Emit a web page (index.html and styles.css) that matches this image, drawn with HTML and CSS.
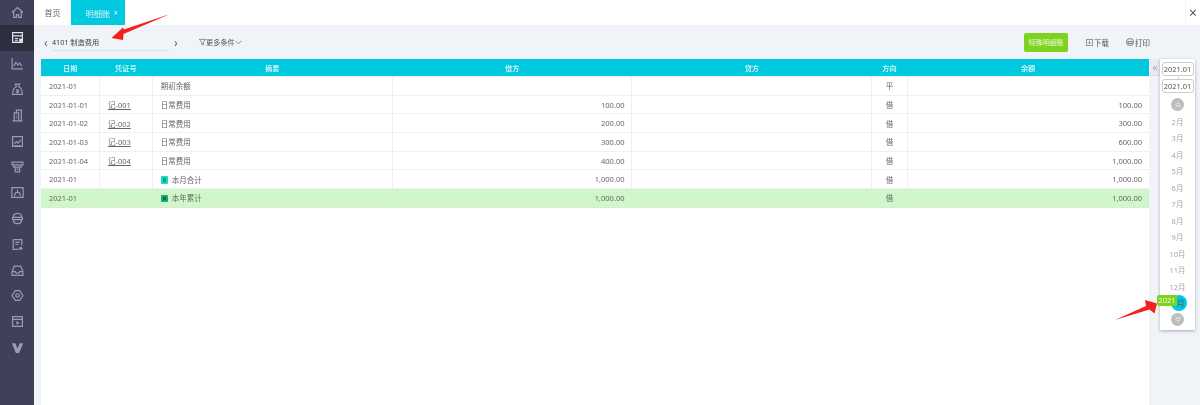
FILE: index.html
```html
<!DOCTYPE html>
<html lang="zh">
<head>
<meta charset="utf-8">
<title>明细账</title>
<link rel="stylesheet" href="styles.css">
</head>
<body>
<div class="app">
  <nav class="side">
    <div class="nav"><svg viewBox="0 0 12 12"><path d="M1 6 6 1.500 11 6M2.500 5v5.500h2.500V8h2v2.500h2.500V5"/></svg></div>
    <div class="nav on"><svg viewBox="0 0 12 12"><path d="M1.500 1.500h9v9h-9zM1.500 4.500h9M3.500 7h3M3.500 9h3"/><rect class="fill" x="7.500" y="7" width="3" height="3"/></svg></div>
    <div class="nav"><svg viewBox="0 0 12 12"><path d="M1 1v10h10M2.500 8.500 4.500 5l2 2.500 1.500-2 2 3"/></svg></div>
    <div class="nav"><svg viewBox="0 0 12 12"><path d="M4 1h4L7 3.500c3 1 3.500 3.500 3.500 7h-9c0-3.500.5-6 3.500-7zM4.500 6.500h3M4.500 8.500h3M6 6.500v3"/></svg></div>
    <div class="nav"><svg viewBox="0 0 12 12"><path d="M3 3.500h4V11H3zM5 3.500V1h4.500v10H7M1.500 11h9M4.500 6h1M4.500 8h1"/></svg></div>
    <div class="nav"><svg viewBox="0 0 12 12"><path d="M1.500 1.500h9v9h-9zM3 8l2-2 1.500 1.500L9 4.500M3 10h6"/></svg></div>
    <div class="nav"><svg viewBox="0 0 12 12"><path d="M1 2h10v2.500H1zM2.500 4.500v2h7v-2M4 6.500V11h4V6.500M5 8.500h2"/></svg></div>
    <div class="nav"><svg viewBox="0 0 12 12"><path d="M.8 1.500h10.400v9H.8zM3 9l1.500-3h3L9 9M6 3.500v2"/></svg></div>
    <div class="nav"><svg viewBox="0 0 12 12"><path d="M2.500 2.500c2-1.500 5-1.500 7 0v2.500h-7zM1.500 5h9v2h-9zM2.500 7v2.500c2 1.500 5 1.500 7 0V7"/></svg></div>
    <div class="nav"><svg viewBox="0 0 12 12"><path d="M2 1.500h8V7M2 1.500v9h5M4 4h4M4 6h3"/><circle class="fill" cx="9" cy="9.500" r="1.500"/></svg></div>
    <div class="nav"><svg viewBox="0 0 12 12"><path d="M3 2h6l2 5v3.500H1V7zM1 7h3l.8 1.500h2.400L8 7h3"/></svg></div>
    <div class="nav"><svg viewBox="0 0 12 12"><path d="M4 1.500h4L11 6 8 10.500H4L1 6z"/><circle cx="6" cy="6" r="1.600"/></svg></div>
    <div class="nav"><svg viewBox="0 0 12 12"><path d="M1.500 1.500h9v9h-9zM1.500 4h9"/><path class="fill" d="M5 5.500 8 7.300 5 9z"/></svg></div>
    <div class="nav"><svg viewBox="0 0 12 12"><path class="fill" d="M.8 2h3.200L6 7l2-5h3.200L7.500 11h-3z"/></svg></div>
  </nav>

  <div class="body">
    <header class="tabs">
      <a class="tab">首页</a>
      <a class="tab active">明细账<span class="tab-x">×</span></a>
      <span class="grow"></span>
      <a class="close">×</a>
    </header>

    <div class="content">
      <div class="main">
        <div class="toolbar">
          <span class="chev">‹</span>
          <span class="account">4101 制造费用</span>
          <span class="chev next">›</span>
          <span class="filter"><svg viewBox="0 0 8 8"><path d="M.5 1h7L5 4.200V7.500L3 6.500V4.200z"/></svg>更多条件<svg class="down" viewBox="0 0 8 5"><path d="M.5.500 4 4 7.500.500"/></svg></span>
          <span class="grow"></span>
          <button class="special">特殊明细账</button>
          <span class="tool"><svg viewBox="0 0 8 8"><path d="M.5.500h7v7h-7zM4 2v3M2.500 4 4 5.500 5.500 4"/></svg>下载</span>
          <span class="tool print"><svg viewBox="0 0 8 8"><circle cx="4" cy="4" r="3.500"/><path d="M2 3.500h4v2H2z"/></svg>打印</span>
        </div>

        <div class="sheet">
          <table>
            <colgroup>
              <col class="c-date"><col class="c-no"><col class="c-memo"><col class="c-amt"><col class="c-amt"><col class="c-dir"><col>
            </colgroup>
            <thead>
              <tr><th>日期</th><th>凭证号</th><th>摘要</th><th>借方</th><th>贷方</th><th>方向</th><th>余额</th></tr>
            </thead>
            <tbody>
              <tr><td>2021-01</td><td></td><td>期初余额</td><td></td><td></td><td class="ct">平</td><td></td></tr>
              <tr><td>2021-01-01</td><td><u>记-001</u></td><td>日常费用</td><td class="num">100.00</td><td></td><td class="ct">借</td><td class="num">100.00</td></tr>
              <tr><td>2021-01-02</td><td><u>记-002</u></td><td>日常费用</td><td class="num">200.00</td><td></td><td class="ct">借</td><td class="num">300.00</td></tr>
              <tr><td>2021-01-03</td><td><u>记-003</u></td><td>日常费用</td><td class="num">300.00</td><td></td><td class="ct">借</td><td class="num">600.00</td></tr>
              <tr><td>2021-01-04</td><td><u>记-004</u></td><td>日常费用</td><td class="num">400.00</td><td></td><td class="ct">借</td><td class="num">1,000.00</td></tr>
              <tr><td>2021-01</td><td></td><td><i class="tag"></i>本月合计</td><td class="num">1,000.00</td><td></td><td class="ct">借</td><td class="num">1,000.00</td></tr>
              <tr class="year"><td>2021-01</td><td></td><td><i class="tag dark"></i>本年累计</td><td class="num">1,000.00</td><td></td><td class="ct">借</td><td class="num">1,000.00</td></tr>
            </tbody>
          </table>
        </div>
      </div>

      <aside class="rail">
        <span class="fold">«</span>
        <div class="dates">
          <span class="date">2021.01</span>
          <span class="date">2021.01</span>
          <span class="round up"><svg viewBox="0 0 8 8"><path d="M1.500 4 4 1.500 6.500 4M1.500 6.500 4 4l2.500 2.500"/></svg></span>
          <ul class="months">
            <li>2月</li><li>3月</li><li>4月</li><li>5月</li><li>6月</li><li>7月</li><li>8月</li><li>9月</li><li>10月</li><li>11月</li><li>12月</li>
            <li class="current"><span class="dot">月</span><span class="year-tag">2021</span></li>
          </ul>
          <span class="round"><svg viewBox="0 0 8 8"><path d="M1.500 1.500 4 4l2.500-2.500M1.500 4 4 6.500 6.500 4"/></svg></span>
        </div>
      </aside>
    </div>
  </div>

  <svg class="arrow a1" viewBox="0 0 60 27"><path d="M59 0 13 15.500 12 13.500 .5 24 12 26 12.500 20z"/></svg>
  <svg class="arrow a2" viewBox="0 0 44 20"><path d="M0 20 31 6 30 0 42 3.500 39.500 13.500 34.500 9.500z"/></svg>
</div>
</body>
</html>
```

FILE: styles.css
```css
* { box-sizing: border-box; }
html, body { margin: 0; height: 100%; overflow: hidden; }
body { font-family: "Noto Sans", "Noto Sans CJK SC", sans-serif; font-size: 7.5px; color: #666; background: #f0f3f7; }
ul { list-style: none; margin: 0; padding: 0; }

.app { position: relative; display: flex; width: 1200px; height: 405px; filter: blur(.4px); }
.grow { flex: 1; }

.side { width: 34px; flex: none; background: #40405a; display: flex; flex-direction: column; }
.nav { height: 25.800px; display: flex; align-items: center; justify-content: center; }
.nav:first-child { height: 25px; }
.nav.on { background: #2d2e3e; }
.nav svg { width: 13px; height: 13px; fill: none; stroke: #9b9cad; stroke-width: 1.100; }
.nav.on svg { stroke: #e4e5ea; }
.nav .fill { fill: #9b9cad; stroke: none; }
.nav.on .fill { fill: #e4e5ea; }

.body { flex: 1; min-width: 0; display: flex; flex-direction: column; }

.tabs { height: 25px; flex: none; background: #fff; display: flex; align-items: stretch; font-size: 8px; }
.tab { width: 37px; display: flex; align-items: center; justify-content: center; color: #666; }
.tab.active { width: 53.500px; background: #00c8de; color: #d9f7fa; padding-left: 8px; gap: 3px; font-size: 8.300px; }
.tab-x { font-size: 8px; }
.close { width: 15px; display: flex; align-items: center; justify-content: center; font-size: 14px; color: #555; border-left: 1px solid #f0f3f7; }

.content { flex: 1; display: flex; min-height: 0; }
.main { flex: 1; min-width: 0; padding-left: 7px; display: flex; flex-direction: column; }

.toolbar { height: 34px; flex: none; display: flex; align-items: center; color: #555; }
.chev { font-size: 12px; color: #666; width: 11px; padding-left: 3px; }
.account { width: 117px; height: 17px; padding-left: 0; line-height: 17px; border-bottom: 1px solid #dfe2e8; color: #444; font-size: 7.200px; }
.chev.next { width: 30px; padding-left: 5px; }
.filter { display: flex; align-items: center; font-size: 7.200px; }
.filter svg { width: 7px; height: 8px; fill: none; stroke: #666; stroke-width: .8; }
.filter .down { height: 5px; }
.special { width: 44px; height: 19px; border: 0; border-radius: 2px; background: #7ed321; color: #e9fbd5; font: inherit; font-size: 7px; padding: 0; margin-right: 18px; }
.tool { display: flex; align-items: center; gap: 1px; font-size: 7.500px; margin-right: 17px; }
.tool.print { margin-right: -1px; }
.tool svg { width: 7px; height: 7px; fill: none; stroke: #666; stroke-width: .8; }
.tool.print svg { width: 8px; height: 8px; }

.sheet { flex: 1; background: #fff; }
table { width: 100%; border-collapse: collapse; table-layout: fixed; }
.c-date { width: 58.500px; }
.c-no { width: 52.800px; }
.c-memo { width: 240px; }
.c-amt { width: 239.700px; }
.c-dir { width: 35.500px; }
th { height: 17.500px; padding: 0; background: #00c8de; color: #eafcfe; font-weight: 500; font-size: 7.200px; text-align: center; }
td { height: 18.700px; padding: 0 8px; border: 1px solid #eef0f3; white-space: nowrap; }
td:first-child { border-left: 0; }
td:last-child { border-right: 0; }
td.num { text-align: right; padding-right: 7px; }
td.ct { text-align: center; padding: 0; }
.year td { background: #d0f7ca; border-color: #dfe7dd; }
.tag { display: inline-block; width: 7.500px; height: 7.500px; margin-right: 3.500px; vertical-align: -1px; border: 2px solid #13dcc0; background: #0a9a88; border-radius: 1px; }
.tag.dark { border-color: #12ad76; background: #0c6e4c; }

.rail { width: 51px; flex: none; display: flex; padding-top: 34px; padding-left: 1px; }
.fold { width: 10px; height: 17px; background: #e8ebf0; color: #a9adb5; font-size: 11px; line-height: 15px; text-align: center; border-bottom: 1px solid #d8dbe0; }
.dates { width: 35px; height: 271px; background: #fff; box-shadow: 0 1px 3px rgba(0,0,0,.3); display: flex; flex-direction: column; align-items: center; padding-top: 3px; }
.date { width: 32px; height: 14px; margin-bottom: 3px; border: 1px solid #ccc; border-radius: 3px; font-size: 7.400px; color: #555; text-align: center; line-height: 12px; background: #fff; position: relative; flex: none; }
.date + .date::before { content: ""; position: absolute; left: 15px; top: -4px; width: 1px; height: 3px; background: #ddd; }
.round { width: 13px; height: 13px; border-radius: 50%; background: #bdbdbd; display: flex; align-items: center; justify-content: center; flex: none; }
.round svg { width: 8px; height: 8px; fill: none; stroke: #eee; stroke-width: 1; }
.round.up { margin-top: 2px; }
.months { margin-top: 2px; width: 100%; }
.months li { height: 16.500px; display: flex; align-items: center; justify-content: center; color: #a5a5a5; position: relative; }
.months .current { height: 18px; }
.dot { width: 16px; height: 16px; border-radius: 50%; flex: none; background: #00c8de; color: #4a5a60; display: flex; align-items: center; justify-content: flex-end; padding-right: 2px; margin: -2px 0 0 2px; }
.year-tag { position: absolute; left: -3px; top: 0; width: 20px; height: 11.500px; background: #7ed321; color: #f2fce4; border-radius: 2px; text-align: center; line-height: 11.500px; }

.arrow { position: absolute; fill: #f5201c; }
.a1 { left: 111px; top: 14px; width: 60px; height: 27px; }
.a2 { left: 1115px; top: 300px; width: 44px; height: 20px; }
```
